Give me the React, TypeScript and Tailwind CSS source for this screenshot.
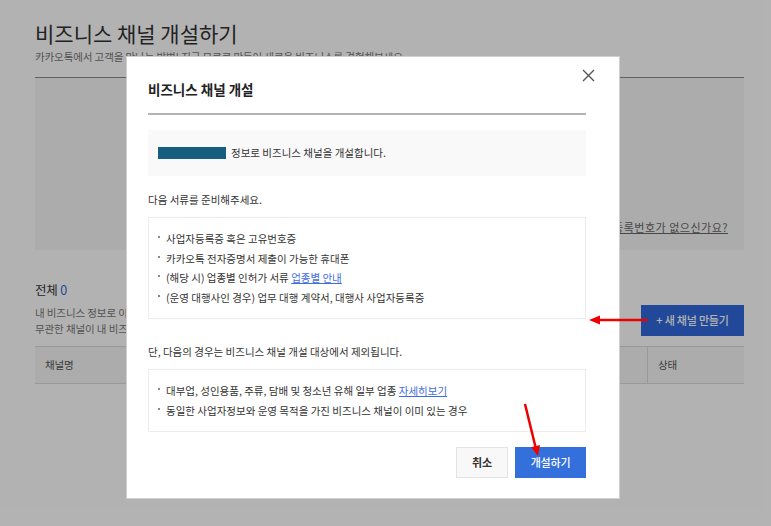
import React from "react";

const Bullet = () => (
  <span className="mt-[7px] mr-[6px] h-[2px] w-[2px] shrink-0 bg-[#8a8a8a]" />
);

export default function App() {
  return (
    <div className="relative h-[526px] w-[771px] overflow-hidden bg-white font-['Noto_Sans_CJK_KR',sans-serif]">
      {/* background page */}
      <div className="ml-[35px] w-[709px] pt-[19px]">
        <h1 className="text-[21px] leading-[29px] tracking-[0px] text-[#333]">비즈니스 채널 개설하기</h1>
        <p className="mt-[1px] text-[10.5px] leading-[16px] tracking-[-0.1px] text-[#777]">
          카카오톡에서 고객을 만나는 방법! 지금 무료로 만들어 새로운 비즈니스를 경험해보세요.
        </p>
        <div className="mt-[12px] flex h-[173px] items-end justify-end border-t border-[#8a8a8a] bg-[#f7f7f7] pb-[15px] pr-[16px]">
          <span className="text-[11px] leading-[16px] tracking-[0.5px] text-[#666] underline">사업자등록번호가 없으신가요?</span>
        </div>
        <div className="mt-[30px] flex items-end justify-between">
          <div>
            <div className="text-[12.5px] leading-[20px] tracking-[-0.2px] text-[#333]">
              전체 <span className="text-[#3068dc]">0</span>
            </div>
            <p className="mt-[5px] text-[10.5px] leading-[16px] tracking-[-0.1px] text-[#777]">
              내 비즈니스 정보로 이미 만들어진 채널이 있다면 채널 연결하기를 진행해주세요.
            </p>
            <p className="text-[10.5px] leading-[16px] tracking-[-0.1px] text-[#777]">
              무관한 채널이 내 비즈니스 정보로 연결되어 있다면 고객센터로 문의해주세요.
            </p>
          </div>
          <button className="mb-[1px] flex h-[31px] w-[103px] items-center justify-center bg-[#3068dc] text-[11px] font-medium tracking-[-0.2px] text-white">
            + 새 채널 만들기
          </button>
        </div>
        <div className="mt-[9px] flex h-[38px] border-y border-[#dcdcdc] bg-[#f7f7f7] text-[10.5px] tracking-[-0.1px] text-[#555]">
          <div className="flex w-[613px] items-center border-r border-[#dcdcdc] pl-[10px]">채널명</div>
          <div className="flex flex-1 items-center pl-[10px]">상태</div>
        </div>
      </div>

      {/* dim overlay */}
      <div className="absolute inset-0 bg-black/30" />

      {/* modal */}
      <div className="absolute left-[126px] top-[56px] h-[443px] w-[494px] border border-[#cfcfcf] bg-white pl-[21px] pr-[33px] pt-[23px]">
        <button className="absolute right-[24px] top-[12px] h-[13px] w-[13px]">
          <svg viewBox="0 0 13 13" className="h-[13px] w-[13px]">
            <path d="M1 1 L12 12 M12 1 L1 12" stroke="#555" strokeWidth="1.4" fill="none" />
          </svg>
        </button>
        <h2 className="text-[13.5px] font-bold leading-[18px] tracking-[0px] text-[#222]">비즈니스 채널 개설</h2>
        <div className="mt-[15px] h-[2px] bg-[#b3b3b3]" />
        <div className="mt-[15px] flex h-[46px] items-center bg-[#f9f9f9] px-[10px] text-[10.5px] tracking-[0px] text-[#333]">
          <span className="h-[12px] w-[68px] bg-[#175d7e]" />
          <span className="ml-[5px]">정보로 비즈니스 채널을 개설합니다.</span>
        </div>
        <p className="mt-[16px] text-[10.5px] leading-[16px] tracking-[0px] text-[#333]">다음 서류를 준비해주세요.</p>
        <ul className="mt-[9px] border border-[#ececec] py-[11px] pl-[9px] text-[10.5px] leading-[19.5px] tracking-[0px] text-[#333]">
          <li className="flex"><Bullet />사업자등록증 혹은 고유번호증</li>
          <li className="flex"><Bullet />카카오톡 전자증명서 제출이 가능한 휴대폰</li>
          <li className="flex">
            <Bullet />(해당 시) 업종별 인허가 서류&nbsp;<span className="text-[#3f6ee0] underline">업종별 안내</span>
          </li>
          <li className="flex"><Bullet />(운영 대행사인 경우) 업무 대행 계약서, 대행사 사업자등록증</li>
        </ul>
        <p className="mt-[25px] text-[10.5px] leading-[16px] tracking-[0px] text-[#333]">
          단, 다음의 경우는 비즈니스 채널 개설 대상에서 제외됩니다.
        </p>
        <ul className="mt-[9px] border border-[#ececec] py-[11px] pl-[9px] text-[10.5px] leading-[19.5px] tracking-[0px] text-[#333]">
          <li className="flex">
            <Bullet />대부업, 성인용품, 주류, 담배 및 청소년 유해 일부 업종&nbsp;<span className="text-[#3f6ee0] underline">자세히보기</span>
          </li>
          <li className="flex"><Bullet />동일한 사업자정보와 운영 목적을 가진 비즈니스 채널이 이미 있는 경우</li>
        </ul>
        <div className="mt-[15px] flex justify-end gap-[7px]">
          <button className="h-[31px] w-[52px] border border-[#e3e3e3] bg-[#f8f8f8] text-[11px] font-bold tracking-[-0.2px] text-[#333]">취소</button>
          <button className="h-[31px] w-[71px] bg-[#3370dc] text-[11px] font-medium tracking-[-0.2px] text-white">개설하기</button>
        </div>
      </div>

      {/* annotation arrows */}
      <svg className="pointer-events-none absolute inset-0" width="771" height="526">
        <line x1="648" y1="320" x2="597" y2="320" stroke="#ee0000" strokeWidth="2.5" />
        <polygon points="589,320 600,315.5 600,324.5" fill="#ee0000" />
        <line x1="525" y1="404" x2="535.5" y2="447" stroke="#ee0000" strokeWidth="2.5" />
        <polygon points="538,456 540,445 531,447.3" fill="#ee0000" />
      </svg>
    </div>
  );
}
